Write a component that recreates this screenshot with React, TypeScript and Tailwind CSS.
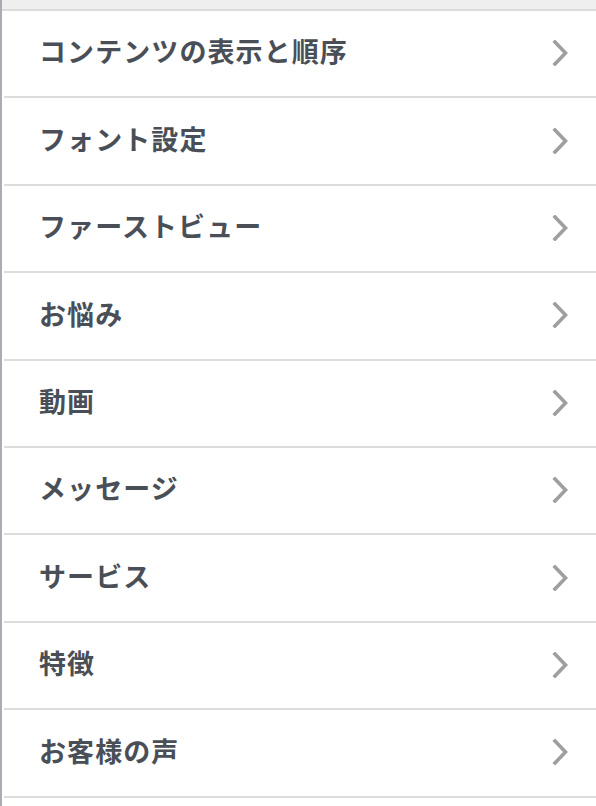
const items = [
  "コンテンツの表示と順序",
  "フォント設定",
  "ファーストビュー",
  "お悩み",
  "動画",
  "メッセージ",
  "サービス",
  "特徴",
  "お客様の声",
];

function Chevron() {
  return (
    <svg width="16" height="26" viewBox="0 0 16 26" fill="none">
      <polyline
        points="3,2 13.5,13 3,24"
        stroke="#9f9f9f"
        strokeWidth="3.6"
        strokeLinecap="square"
        strokeLinejoin="miter"
      />
    </svg>
  );
}

export default function App() {
  return (
    <div className="min-h-[806px] w-full overflow-hidden border-l-2 border-[#a9acb1] bg-white font-['Noto_Sans_CJK_JP',sans-serif]">
      <div className="h-[11px] border-b-2 border-[#dcdcdc] bg-[#efefef]" />
      <ul className="ml-[2px]">
        {items.map((label) => (
          <li
            key={label}
            className="flex h-[87.4px] items-center justify-between border-b-2 border-[#dcdcdc] pb-[4px] pl-[35px] pr-[28px]"
          >
            <span className="text-[27px] font-bold tracking-[0.04em] text-[#4a4f57]">
              {label}
            </span>
            <span className="pt-[3px]">
              <Chevron />
            </span>
          </li>
        ))}
      </ul>
    </div>
  );
}
